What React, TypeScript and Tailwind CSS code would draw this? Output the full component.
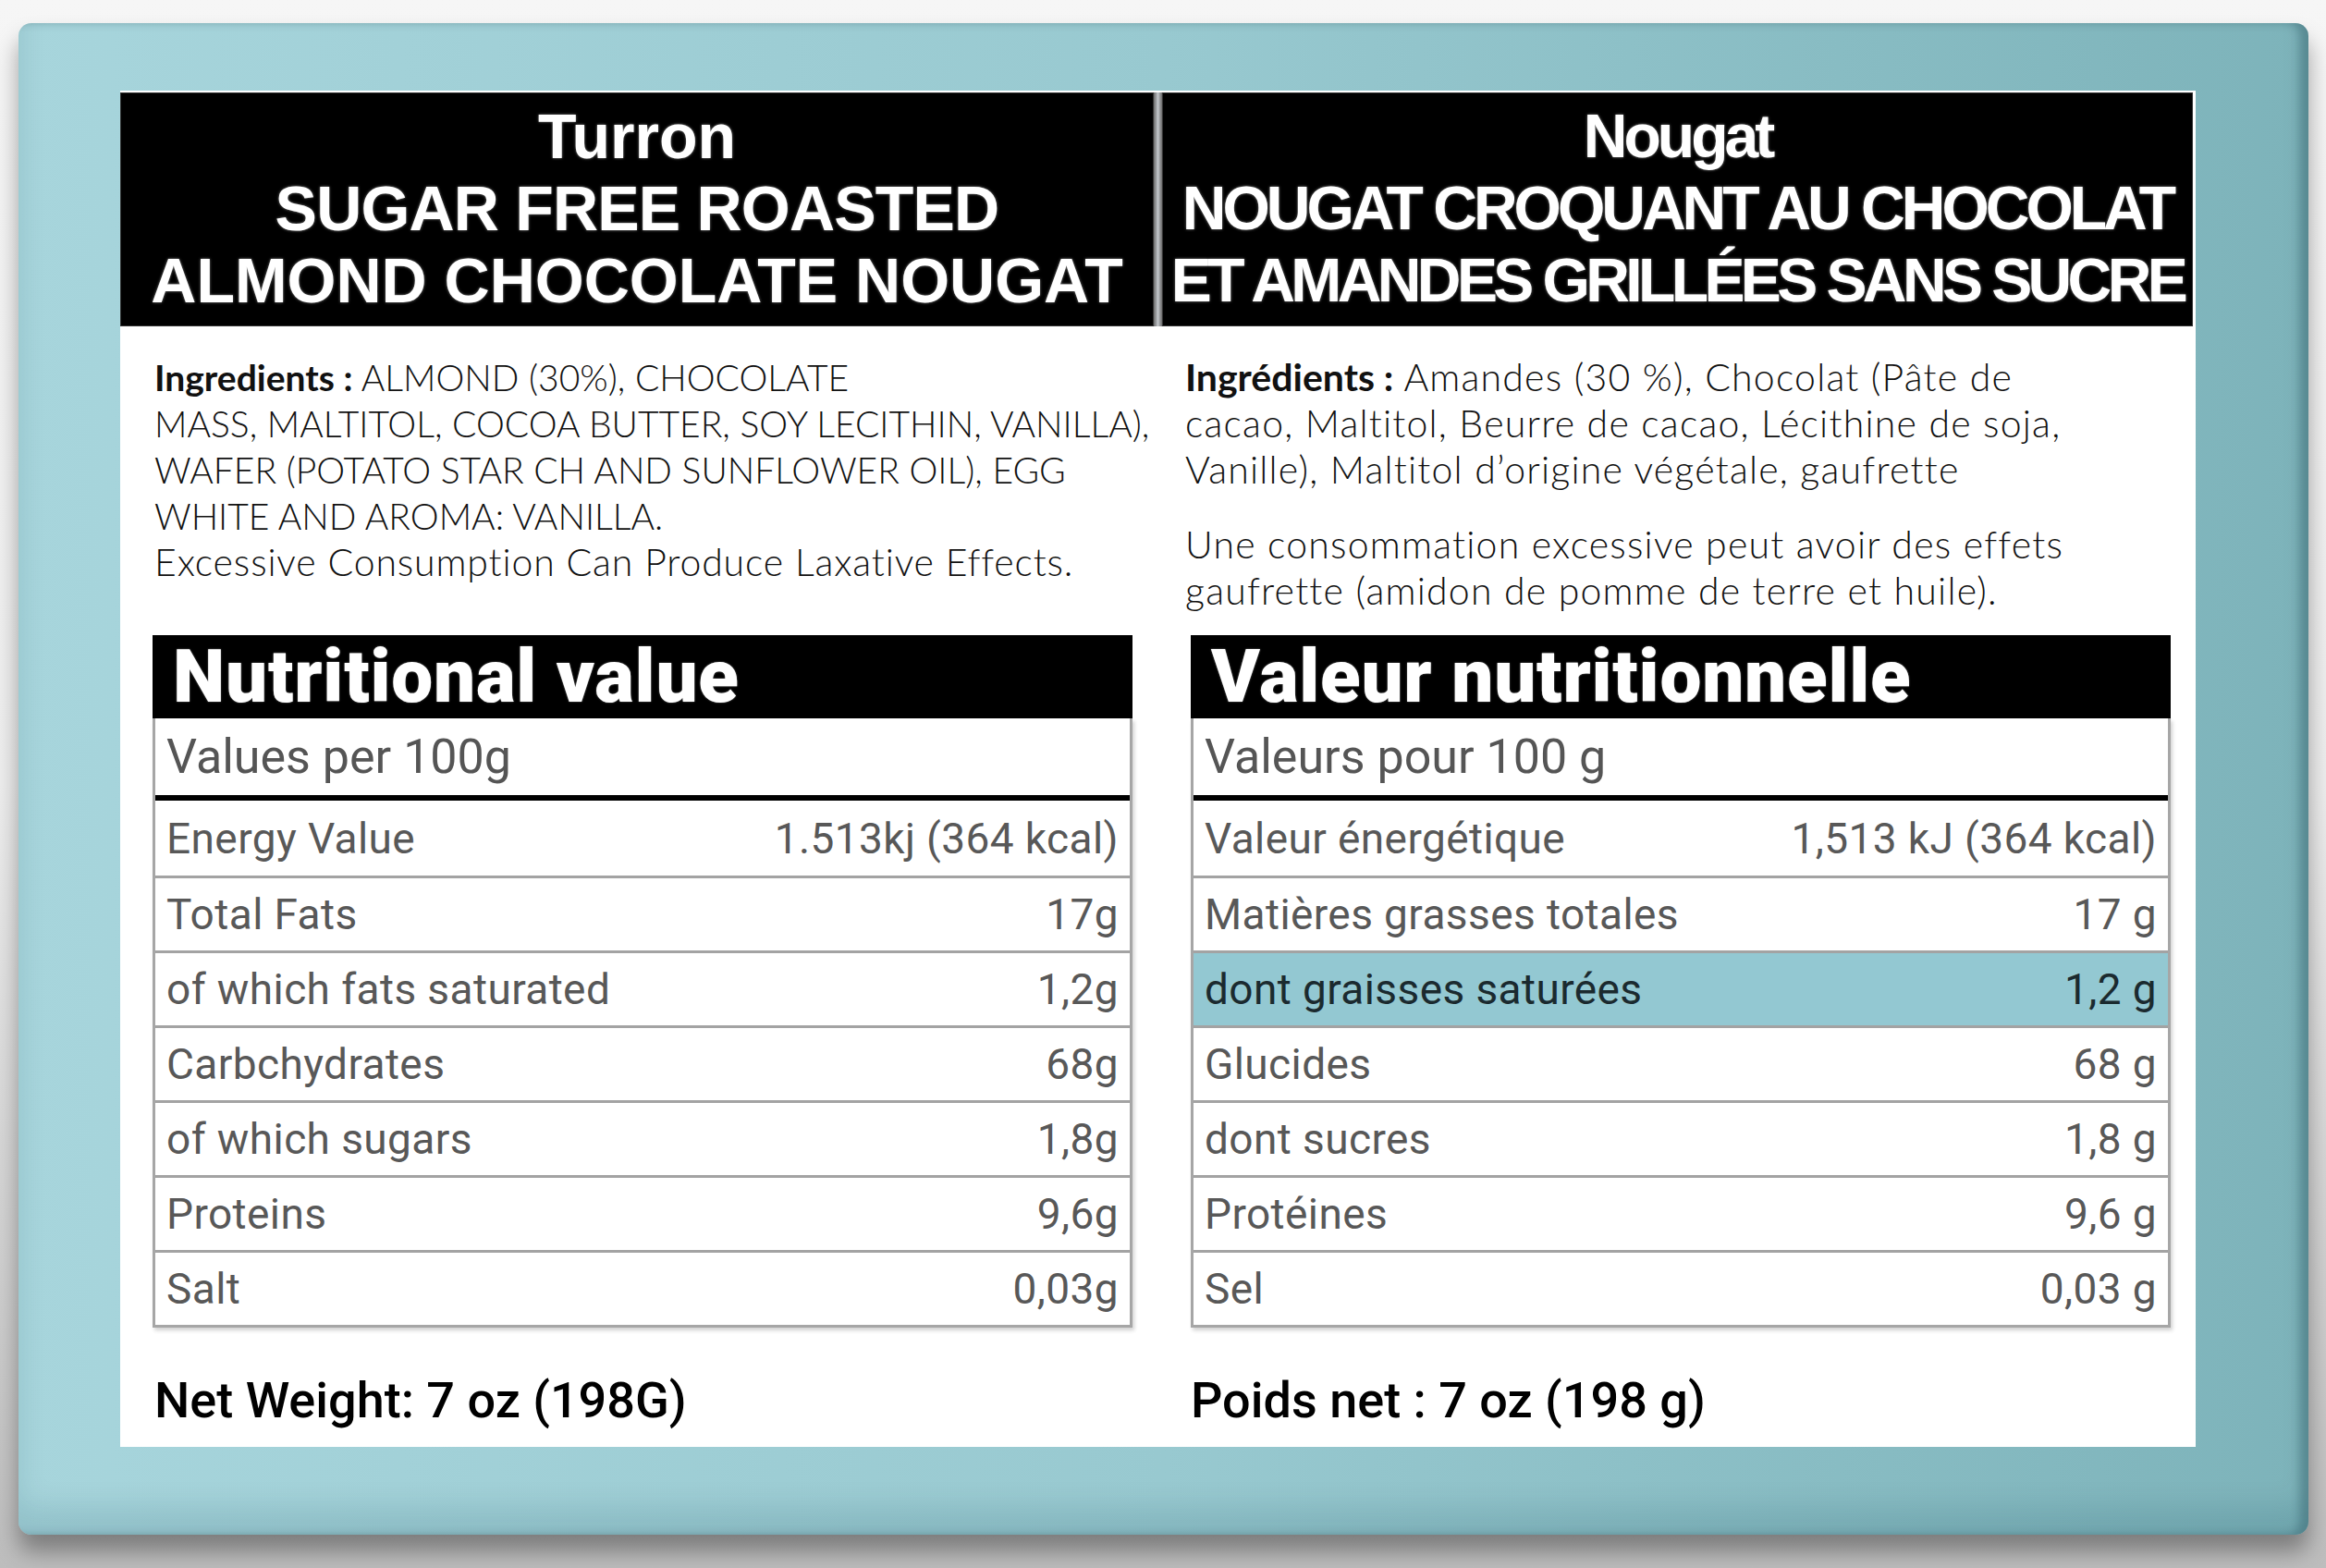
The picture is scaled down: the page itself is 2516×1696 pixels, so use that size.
import React from "react";

type Row = { label: string; value: string; hl?: boolean };

const leftRows: Row[] = [
  { label: "Energy Value", value: "1.513kj (364 kcal)" },
  { label: "Total Fats", value: "17g" },
  { label: "of which fats saturated", value: "1,2g" },
  { label: "Carbchydrates", value: "68g" },
  { label: "of which sugars", value: "1,8g" },
  { label: "Proteins", value: "9,6g" },
  { label: "Salt", value: "0,03g" },
];

const rightRows: Row[] = [
  { label: "Valeur énergétique", value: "1,513 kJ (364 kcal)" },
  { label: "Matières grasses totales", value: "17 g" },
  { label: "dont graisses saturées", value: "1,2 g", hl: true },
  { label: "Glucides", value: "68 g" },
  { label: "dont sucres", value: "1,8 g" },
  { label: "Protéines", value: "9,6 g" },
  { label: "Sel", value: "0,03 g" },
];

function Table({ title, per, rows }: { title: string; per: string; rows: Row[] }) {
  return (
    <div className="w-[1060px] font-['Roboto',sans-serif]">
      <div className="h-[90px] bg-black flex items-center pl-[22px] text-white text-[80px] font-black leading-none tracking-[0.8px] [text-shadow:0_0_2px_#777]">
        {title}
      </div>
      <div className="border-x-[3px] border-b-[3px] border-[#a6a6a6] bg-white shadow-[2px_3px_4px_rgba(0,0,0,0.18)]">
        <div className="h-[83px] flex items-center px-[12px] text-[52px] text-[#555555] leading-none">{per}</div>
        <div className="h-[6px] bg-black" />
        {rows.map((r, i) => (
          <div
            key={r.label}
            className={
              "h-[81px] flex items-center justify-between px-[12px] text-[46px] tracking-[0.4px] leading-none " +
              (i > 0 ? "border-t-[3px] border-[#a3a3a3] " : "") +
              (r.hl ? "bg-[#93c8d2] text-[#1b2a2f]" : "text-[#585858]")
            }
          >
            <span>{r.label}</span>
            <span>{r.value}</span>
          </div>
        ))}
      </div>
    </div>
  );
}

export default function App() {
  return (
    <div className="w-[2516px] h-[1696px] overflow-hidden bg-gradient-to-b from-[#f6f6f6] via-[#eeeeee] to-[#bdbdbd]">
      <div className="ml-[20px] mt-[25px] w-[2477px] h-[1635px] rounded-[14px] bg-gradient-to-r from-[#a7d5dc] via-[#98c9d0] to-[#7db3ba] shadow-[0_18px_24px_rgba(0,0,0,0.35),inset_-10px_0_10px_rgba(0,40,50,0.25),inset_0_-30px_30px_rgba(0,60,70,0.12)] pt-[73px] pl-[110px]">
        <div className="w-[2245px] h-[1467px] bg-white flex flex-col">
          {/* Headers */}
          <div className="flex h-[255px] pt-[2px]">
            <div className="w-[1118px] bg-black flex flex-col items-center justify-center pb-[4px] text-white font-['Liberation_Sans',Arial,sans-serif] font-bold text-[68px] leading-[78px] [text-shadow:0_0_3px_#888] ring-1 ring-inset ring-[#333]">
              <div>Turron</div>
              <div className="tracking-[-0.8px]">SUGAR FREE ROASTED</div>
              <div>ALMOND CHOCOLATE NOUGAT</div>
            </div>
            <div className="w-[9px] bg-gradient-to-r from-[#6a6a6a] via-[#c3c7cb] to-[#6a6a6a]" />
            <div className="w-[1115px] bg-black flex flex-col items-center justify-center pb-[4px] text-white font-['Liberation_Sans',Arial,sans-serif] font-bold text-[66px] leading-[78px] tracking-[-4px] [text-shadow:0_0_3px_#888] ring-1 ring-inset ring-[#333]">
              <div>Nougat</div>
              <div>NOUGAT CROQUANT AU CHOCOLAT</div>
              <div className="tracking-[-4.6px]">ET AMANDES GRILLÉES SANS SUCRE</div>
            </div>
          </div>

          {/* Body grid */}
          <div className="grid grid-cols-[1122px_1123px]">
            {/* Ingredients left */}
            <div className="pl-[37px] pr-[20px] pt-[30px] font-['Lato',sans-serif] font-light text-[39px] leading-[50px] text-[#111] whitespace-nowrap">
              <div>
                <span className="font-bold">Ingredients :</span> ALMOND (30%), CHOCOLATE
              </div>
              <div>MASS, MALTITOL, COCOA BUTTER, SOY LECITHIN, VANILLA),</div>
              <div>WAFER (POTATO STAR CH AND SUNFLOWER OIL), EGG</div>
              <div>WHITE AND AROMA: VANILLA.</div>
              <div className="text-[41px] tracking-[0.85px]">Excessive Consumption Can Produce Laxative Effects.</div>
            </div>
            {/* Ingredients right */}
            <div className="pl-[30px] pr-[20px] pt-[30px] font-['Lato',sans-serif] font-light text-[41px] tracking-[1.2px] leading-[50px] text-[#111] whitespace-nowrap">
              <div>
                <span className="font-bold tracking-[0px]">Ingrédients :</span> Amandes (30 %), Chocolat (Pâte de
              </div>
              <div>cacao, Maltitol, Beurre de cacao, Lécithine de soja,</div>
              <div>Vanille), Maltitol d’origine végétale, gaufrette</div>
              <div className="mt-[31px]">Une consommation excessive peut avoir des effets</div>
              <div>gaufrette (amidon de pomme de terre et huile).</div>
            </div>

            {/* Tables */}
            <div className="pl-[35px] pt-[23px]">
              <Table title="Nutritional value" per="Values per 100g" rows={leftRows} />
            </div>
            <div className="pl-[36px] pt-[23px]">
              <Table title="Valeur nutritionnelle" per="Valeurs pour 100 g" rows={rightRows} />
            </div>

            {/* Net weight */}
            <div className="pl-[37px] pt-[48px] font-['Roboto',sans-serif] font-medium text-[54px] leading-[62px] text-black whitespace-nowrap">
              Net Weight: 7 oz (198G)
            </div>
            <div className="pl-[36px] pt-[48px] font-['Roboto',sans-serif] font-medium text-[54px] leading-[62px] text-black whitespace-nowrap">
              Poids net : 7 oz (198 g)
            </div>
          </div>
        </div>
      </div>
    </div>
  );
}
